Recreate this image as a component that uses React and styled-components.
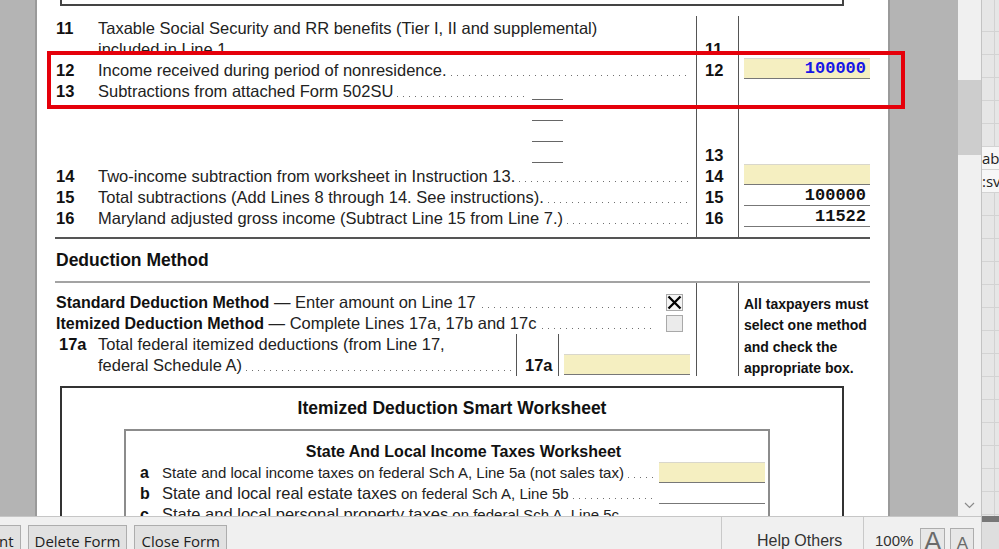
import React from 'react';
import styled, { createGlobalStyle } from 'styled-components';

const LINE = 21;

const incomeRows = [
  {
    n: '11',
    lines: ['Taxable Social Security and RR benefits (Tier I, II and supplemental)', 'included in Line 1'],
    noLeader: true,
  },
  { n: '12', lines: ['Income received during period of nonresidence.'], amount: '100000', entry: true },
  { n: '13', lines: ['Subtractions from attached Form 502SU'], blanks: 4, extra: 1 },
  { n: '14', lines: ['Two-income subtraction from worksheet in Instruction 13.'], amount: '', entry: true },
  { n: '15', lines: ['Total subtractions (Add Lines 8 through 14. See instructions).'], amount: '100000' },
  { n: '16', lines: ['Maryland adjusted gross income (Subtract Line 15 from Line 7.)'], amount: '11522' },
];

const noteLines = ['All taxpayers must', 'select one method', 'and check the', 'appropriate box.'];

const sheetRows = Array.from({ length: 22 }, (_, i) => (i === 6 ? 'ab' : i === 7 ? ':sv' : ''));

const rowHeight = row => (row.blanks || row.lines.length) * LINE + (row.extra || 0);

const GlobalStyle = createGlobalStyle`
  *, *::before, *::after { box-sizing: border-box; }
  html, body { margin: 0; padding: 0; overflow: hidden; background: #b4b4b4; }
  body { font-family: "Liberation Sans", Arial, sans-serif; color: #222; }
`;

const Screen = styled.div`
  position: relative;
  display: flex;
  width: 999px;
  height: 549px;
  overflow: hidden;
`;

const Main = styled.div`
  display: flex;
  flex-direction: column;
  width: 981px;
  flex: none;
`;

const Workspace = styled.div`
  display: flex;
  height: 516px;
  overflow: hidden;
`;

const Gutter = styled.div`
  width: ${p => p.$w}px;
  flex: none;
  background: #b4b4b4;
`;

const Page = styled.div`
  width: 855px;
  flex: none;
  background: #fff;
  border-left: 2px solid #9a9a9a;
  border-right: 2px solid #9a9a9a;
  padding-left: 18px;
  overflow: hidden;
`;

const Form = styled.div`
  width: 815px;
`;

const PrevBox = styled.div`
  margin-left: 5px;
  width: 784px;
  height: 6px;
  border: 2px solid #444;
  border-top: none;
`;

const IncomeSection = styled.div`
  display: flex;
  margin-top: 10px;
  border-bottom: 2px solid #555;
`;

const TextCol = styled.div`
  width: 641px;
  flex: none;
  padding: ${p => p.$top ?? 2}px 0 ${p => p.$bottom ?? 8}px;
`;

const NumCol = styled.div`
  width: 43px;
  flex: none;
  border-left: 1px solid #555;
  border-right: 1px solid #555;
  padding: 2px 0 8px;
`;

const AmtCol = styled.div`
  width: 131px;
  flex: none;
  padding: 2px 0 8px 5px;
`;

const LineRow = styled.div`
  display: flex;
  height: ${p => p.$h}px;
`;

const LineNo = styled.div`
  width: 43px;
  flex: none;
  padding-left: ${p => p.$indent ?? 1}px;
  font-size: 16.5px;
  font-weight: bold;
  line-height: ${LINE}px;
  color: #111;
`;

const RowBody = styled.div`
  flex: 1;
  min-width: 0;
  display: flex;
  flex-direction: column;
`;

const TextLine = styled.div`
  display: flex;
  height: ${LINE}px;
  line-height: ${LINE}px;
  font-size: 16.5px;
  white-space: nowrap;
`;

const Leader = styled.span`
  flex: 1;
  min-width: 0;
  height: 1px;
  align-self: flex-end;
  margin: 0 ${p => p.$end ?? 7}px 5px ${p => p.$start ?? 4}px;
  background-image: linear-gradient(to right, #707070 1px, transparent 1px);
  background-size: 6px 1px;
  background-repeat: repeat-x;
`;

const BlankStack = styled.div`
  width: 31px;
  flex: none;
  margin-right: 133px;
`;

const Blank = styled.div`
  height: 19px;
  margin-bottom: 2px;
  border-bottom: 1px solid #666;
`;

const NumCell = styled.div`
  height: ${p => p.$h}px;
  display: flex;
  align-items: flex-end;
  padding-left: 8px;
  font-size: 16.5px;
  font-weight: bold;
  line-height: ${LINE}px;
  color: #111;
`;

const AmtCell = styled.div`
  height: ${p => p.$h}px;
  display: flex;
  align-items: flex-end;
  padding-bottom: 2px;
`;

const Field = styled.div`
  width: ${p => p.$w ?? 126}px;
  height: 21px;
  flex: none;
  margin-right: ${p => p.$mr ?? 0}px;
  background: ${p => (p.$entry ? '#f5efc1' : 'transparent')};
  border-top: 1px solid ${p => (p.$entry ? '#d9d7cc' : 'transparent')};
  border-bottom: 1px solid #777;
  padding-right: 4px;
  text-align: right;
  font-family: "Liberation Mono", "Courier New", monospace;
  font-weight: bold;
  font-size: 17px;
  line-height: 19px;
  color: ${p => p.$color ?? '#111'};
`;

const Heading = styled.h2`
  margin: 0;
  padding: 11px 0 10px 1px;
  font-size: 17.5px;
  line-height: ${LINE}px;
  font-weight: bold;
  color: #111;
  border-bottom: 2px solid #a3a3a3;
`;

const DeductionSection = styled.div`
  display: flex;
  height: 93px;
`;

const MethodRow = styled.div`
  display: flex;
  align-items: center;
  height: ${LINE}px;
  line-height: ${LINE}px;
  padding-left: 1px;
  font-size: 16.5px;
  white-space: nowrap;
`;

const Strong = styled.b`
  font-size: 16px;
  color: #111;
`;

const CheckBox = styled.span`
  width: 17px;
  height: 17px;
  flex: none;
  margin-right: 13px;
  border: 1px solid #a9a9a9;
  background: ${p => (p.$checked ? '#f4f4f4' : '#ebebeb')};
  display: flex;
`;

const SubNum = styled.div`
  width: 43px;
  flex: none;
  border-left: 1px solid #555;
  border-right: 1px solid #555;
  display: flex;
  align-items: flex-end;
  padding-left: 8px;
  font-size: 16.5px;
  font-weight: bold;
  line-height: ${LINE}px;
  color: #111;
`;

const SubAmt = styled.div`
  width: 137px;
  flex: none;
  display: flex;
  align-items: flex-end;
  padding: 0 0 1px 5px;
`;

const Note = styled.div`
  width: 131px;
  flex: none;
  padding: 11px 0 0 5px;
  font-size: 14px;
  font-weight: bold;
  line-height: 21.3px;
  white-space: nowrap;
  color: #111;
`;

const Worksheet = styled.section`
  margin: 10px 0 0 5px;
  width: 784px;
  height: 200px;
  border: 2px solid #333;
  border-bottom: none;
  padding-top: 10px;
`;

const WsTitle = styled.div`
  text-align: center;
  font-size: 17.5px;
  font-weight: bold;
  line-height: ${LINE}px;
  color: #111;
`;

const Inner = styled.div`
  margin: 10px 0 0 62px;
  width: 646px;
  height: 150px;
  border: 2px solid #8c8c8c;
  border-bottom: none;
  padding-top: 10px;
`;

const InnerTitle = styled.div`
  padding-left: 33px;
  text-align: center;
  font-size: 16px;
  font-weight: bold;
  line-height: ${LINE}px;
  color: #111;
`;

const WsRow = styled.div`
  display: flex;
  height: ${LINE}px;
  line-height: ${LINE}px;
  padding-left: 14px;
  font-size: 15px;
  white-space: nowrap;
`;

const WsLetter = styled.b`
  width: 22px;
  flex: none;
  font-size: 16px;
  color: #111;
`;

const Big = styled.span`
  font-size: 16.5px;
`;

const Scrollbar = styled.div`
  width: 23px;
  flex: none;
  display: flex;
  flex-direction: column;
  background: #f0f0f0;
`;

const Thumb = styled.div`
  margin-top: 80px;
  height: 75px;
  background: #cdcdcd;
`;

const ScrollSpace = styled.div`
  flex: 1;
`;

const ArrowBox = styled.div`
  height: 22px;
  display: flex;
  align-items: center;
  justify-content: center;
`;

const Toolbar = styled.div`
  display: flex;
  height: 33px;
  background: #f0f0f0;
  border-top: 1px solid #c6c6c6;
  overflow: hidden;
`;

const ButtonRow = styled.div`
  display: flex;
  gap: 7px;
  margin-left: -27px;
  padding-top: 8px;
`;

const Button = styled.div`
  height: 30px;
  padding: 4px 6px 0;
  border: 1px solid #adadad;
  background: #e1e1e1;
  font-family: "Open Sans", "Noto Sans", sans-serif;
  font-size: 15px;
  line-height: 22px;
  color: #1e1e1e;
  white-space: nowrap;
`;

const Spacer = styled.div`
  flex: 1;
`;

const HelpPane = styled.div`
  width: 142px;
  flex: none;
  border-left: 1px solid #c9c9c9;
  padding: 14px 0 0 35px;
  font-size: 16px;
  line-height: 20px;
  color: #333;
  white-space: nowrap;
`;

const ZoomPane = styled.div`
  width: 118px;
  flex: none;
  display: flex;
  border-left: 1px solid #c9c9c9;
  padding-left: 11px;
`;

const ZoomText = styled.div`
  padding-top: 14px;
  margin-right: 7px;
  font-size: 15px;
  line-height: 20px;
  color: #333;
`;

const SizeButton = styled.div`
  width: ${p => p.$w}px;
  height: 26px;
  margin: 11px 5px 0 0;
  border: 1px solid #adadad;
  background: #e7e7e7;
  display: flex;
  justify-content: center;
  font-size: ${p => p.$size}px;
  line-height: ${p => p.$lh}px;
  color: #6a6a6a;
`;

const Sheet = styled.div`
  flex: 1;
  display: flex;
  flex-direction: column;
  border-left: 1px solid #c3c3c3;
  background: #e6e6e6;
  overflow: hidden;
`;

const SheetCells = styled.div`
  height: 516px;
  padding-top: 9px;
  overflow: hidden;
  background-image: linear-gradient(to right, transparent 12px, #d2d2d2 12px, #d2d2d2 13px, transparent 13px);
`;

const SheetCell = styled.div`
  height: 23px;
  border-bottom: 1px solid #d3d3d3;
  background: ${p => (p.$filled ? '#f7f7f7' : 'transparent')};
  font-family: "Open Sans", "Noto Sans", sans-serif;
  font-size: 15px;
  line-height: 22px;
  white-space: nowrap;
  color: #222;
`;

const SheetFoot = styled.div`
  flex: 1;
  border-top: 6px solid #777;
  background: #dedede;
`;

const Highlight = styled.div`
  position: absolute;
  left: 47px;
  top: 51px;
  width: 858px;
  height: 58px;
  border: 4px solid #e5000a;
  pointer-events: none;
`;

const CheckMark = () => (
  <svg width="15" height="15" viewBox="0 0 15 15">
    <path d="M1.5 1.5 L13.5 13.5 M13.5 1.5 L1.5 13.5" stroke="#000" strokeWidth="2.3" fill="none" />
  </svg>
);

const Chevron = () => (
  <svg width="11" height="7" viewBox="0 0 11 7">
    <polyline points="1,1 5.5,5.5 10,1" stroke="#8a8a8a" strokeWidth="1.2" fill="none" />
  </svg>
);

const IncomeText = ({ row }) => {
  const last = row.lines.length - 1;
  return (
    <LineRow $h={rowHeight(row)}>
      <LineNo>{row.n}</LineNo>
      <RowBody>
        {row.lines.map((text, i) => (
          <TextLine key={i}>
            <span>{text}</span>
            {i === last && !row.noLeader && <Leader $end={row.blanks ? 5 : 7} />}
          </TextLine>
        ))}
      </RowBody>
      {row.blanks && (
        <BlankStack>
          {Array.from({ length: row.blanks }, (_, i) => <Blank key={i} />)}
        </BlankStack>
      )}
    </LineRow>
  );
};

const Method = ({ title, rest, checked }) => (
  <MethodRow>
    <Strong>{title}</Strong>
    <span>&nbsp;— {rest}</span>
    <Leader $start={6} $end={10} />
    <CheckBox $checked={checked}>{checked && <CheckMark />}</CheckBox>
  </MethodRow>
);

const WsLine = ({ letter, entry, children }) => (
  <WsRow>
    <WsLetter>{letter}</WsLetter>
    <span>{children}</span>
    <Leader $end={5} />
    <Field $entry={entry} $w={106} $mr={3} />
  </WsRow>
);

export default function App() {
  return (
    <>
      <GlobalStyle />
      <Screen>
        <Main>
          <Workspace>
            <Gutter $w={35} />
            <Page>
              <Form>
                <PrevBox />
                <IncomeSection>
                  <TextCol>
                    {incomeRows.map(row => <IncomeText key={row.n} row={row} />)}
                  </TextCol>
                  <NumCol>
                    {incomeRows.map(row => (
                      <NumCell key={row.n} $h={rowHeight(row)}>{row.n}</NumCell>
                    ))}
                  </NumCol>
                  <AmtCol>
                    {incomeRows.map(row => (
                      <AmtCell key={row.n} $h={rowHeight(row)}>
                        {row.amount !== undefined && (
                          <Field $entry={row.entry} $color={row.entry ? '#1616e6' : '#111'}>
                            {row.amount}
                          </Field>
                        )}
                      </AmtCell>
                    ))}
                  </AmtCol>
                </IncomeSection>

                <Heading>Deduction Method</Heading>
                <DeductionSection>
                  <TextCol $top={9} $bottom={0}>
                    <Method title="Standard Deduction Method" rest="Enter amount on Line 17" checked />
                    <Method title="Itemized Deduction Method" rest="Complete Lines 17a, 17b and 17c" />
                    <LineRow $h={2 * LINE}>
                      <LineNo $indent={4}>17a</LineNo>
                      <RowBody>
                        <TextLine>
                          <span>Total federal itemized deductions (from Line 17,</span>
                        </TextLine>
                        <TextLine>
                          <span>federal Schedule A)</span>
                          <Leader $end={4} />
                        </TextLine>
                      </RowBody>
                      <SubNum>17a</SubNum>
                      <SubAmt>
                        <Field $entry />
                      </SubAmt>
                    </LineRow>
                  </TextCol>
                  <NumCol />
                  <Note>
                    {noteLines.map(line => <div key={line}>{line}</div>)}
                  </Note>
                </DeductionSection>

                <Worksheet>
                  <WsTitle>Itemized Deduction Smart Worksheet</WsTitle>
                  <Inner>
                    <InnerTitle>State And Local Income Taxes Worksheet</InnerTitle>
                    <WsLine letter="a" entry>
                      State and local income taxes on federal Sch A, Line 5a (not sales tax)
                    </WsLine>
                    <WsLine letter="b">
                      <Big>State and local real estate taxes</Big> on federal Sch A, Line 5b
                    </WsLine>
                    <WsLine letter="c">
                      <Big>State and local personal property taxes</Big> on federal Sch A, Line 5c
                    </WsLine>
                  </Inner>
                </Worksheet>
              </Form>
            </Page>
            <Gutter $w={68} />
            <Scrollbar>
              <Thumb />
              <ScrollSpace />
              <ArrowBox>
                <Chevron />
              </ArrowBox>
            </Scrollbar>
          </Workspace>

          <Toolbar>
            <ButtonRow>
              <Button>Print</Button>
              <Button>Delete Form</Button>
              <Button>Close Form</Button>
            </ButtonRow>
            <Spacer />
            <HelpPane>Help Others</HelpPane>
            <ZoomPane>
              <ZoomText>100%</ZoomText>
              <SizeButton $w={25} $size={27} $lh={26}>A</SizeButton>
              <SizeButton $w={24} $size={17} $lh={30}>A</SizeButton>
            </ZoomPane>
          </Toolbar>
        </Main>

        <Sheet>
          <SheetCells>
            {sheetRows.map((text, i) => (
              <SheetCell key={i} $filled={!!text}>{text}</SheetCell>
            ))}
          </SheetCells>
          <SheetFoot />
        </Sheet>

        <Highlight />
      </Screen>
    </>
  );
}
